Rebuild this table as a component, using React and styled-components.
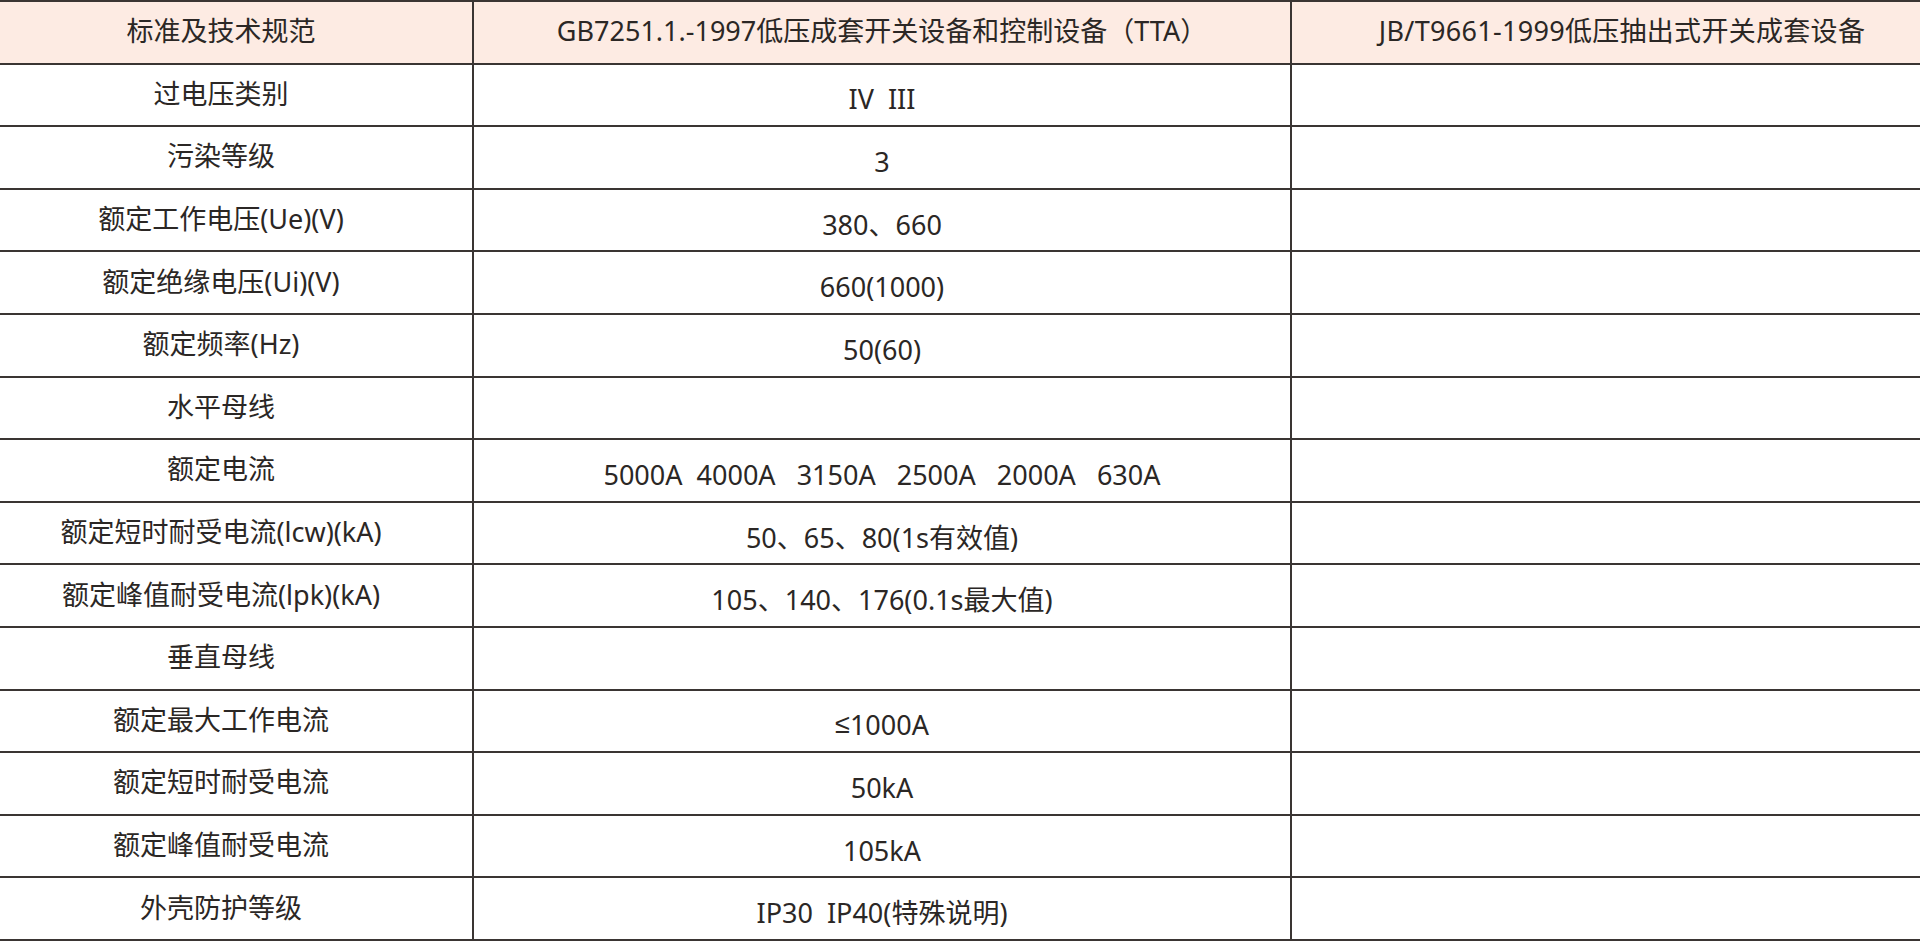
import React from "react";
import styled, { createGlobalStyle } from "styled-components";

const GlobalStyle = createGlobalStyle`
  html, body {
    margin: 0;
    padding: 0;
    background: #ffffff;
  }
  body {
    font-family: "Noto Sans", "Noto Sans CJK SC", sans-serif;
    color: #2b2725;
  }
`;

const Table = styled.div`
  width: 1920px;
  height: 941px;
  border-top: 2px solid #3a3533;
  box-sizing: border-box;
  display: grid;
  grid-template-rows: repeat(15, 1fr);
  overflow: hidden;
`;

const Row = styled.div`
  display: grid;
  grid-template-columns: 474px 818px 1fr;
  border-bottom: 2px solid #3a3533;
  background: ${props => (props.head ? "#fdebe3" : "#ffffff")};
  min-height: 0;
`;

const Cell = styled.div`
  display: flex;
  align-items: center;
  justify-content: center;
  border-right: 2px solid #3a3533;
  font-size: 27px;
  line-height: 1;
  white-space: pre;
  padding-bottom: 3px;
`;

const Label = styled(Cell)`
  padding-right: 30px;
`;

const Value = styled(Cell)`
  padding-top: ${props => (props.head ? "0" : "8px")};
  padding-bottom: ${props => (props.head ? "3px" : "0")};
`;

const Extra = styled(Cell)`
  border-right: none;
  padding-left: 32px;
  letter-spacing: ${props => (props.head ? "0.3px" : "0")};
`;

const Sym = styled.span`
  font-family: "Liberation Sans", "DejaVu Sans", sans-serif;
`;

const rows = [
  ["过电压类别", "IV  III"],
  ["污染等级", "3"],
  ["额定工作电压(Ue)(V)", "380、660"],
  ["额定绝缘电压(Ui)(V)", "660(1000)"],
  ["额定频率(Hz)", "50(60)"],
  ["水平母线", ""],
  ["额定电流", "5000A  4000A   3150A   2500A   2000A   630A"],
  ["额定短时耐受电流(lcw)(kA)", "50、65、80(1s有效值)"],
  ["额定峰值耐受电流(lpk)(kA)", "105、140、176(0.1s最大值)"],
  ["垂直母线", ""],
  ["额定最大工作电流", <><Sym>≤</Sym>1000A</>],
  ["额定短时耐受电流", "50kA"],
  ["额定峰值耐受电流", "105kA"],
  ["外壳防护等级", "IP30  IP40(特殊说明)"]
];

export default function App() {
  return (
    <>
      <GlobalStyle />
      <Table>
        <Row head>
          <Label>标准及技术规范</Label>
          <Value head>GB7251.1.-1997低压成套开关设备和控制设备（TTA）</Value>
          <Extra head>JB/T9661-1999低压抽出式开关成套设备</Extra>
        </Row>
        {rows.map(([label, value]) => (
          <Row key={label}>
            <Label>{label}</Label>
            <Value>{value}</Value>
            <Extra />
          </Row>
        ))}
      </Table>
    </>
  );
}
